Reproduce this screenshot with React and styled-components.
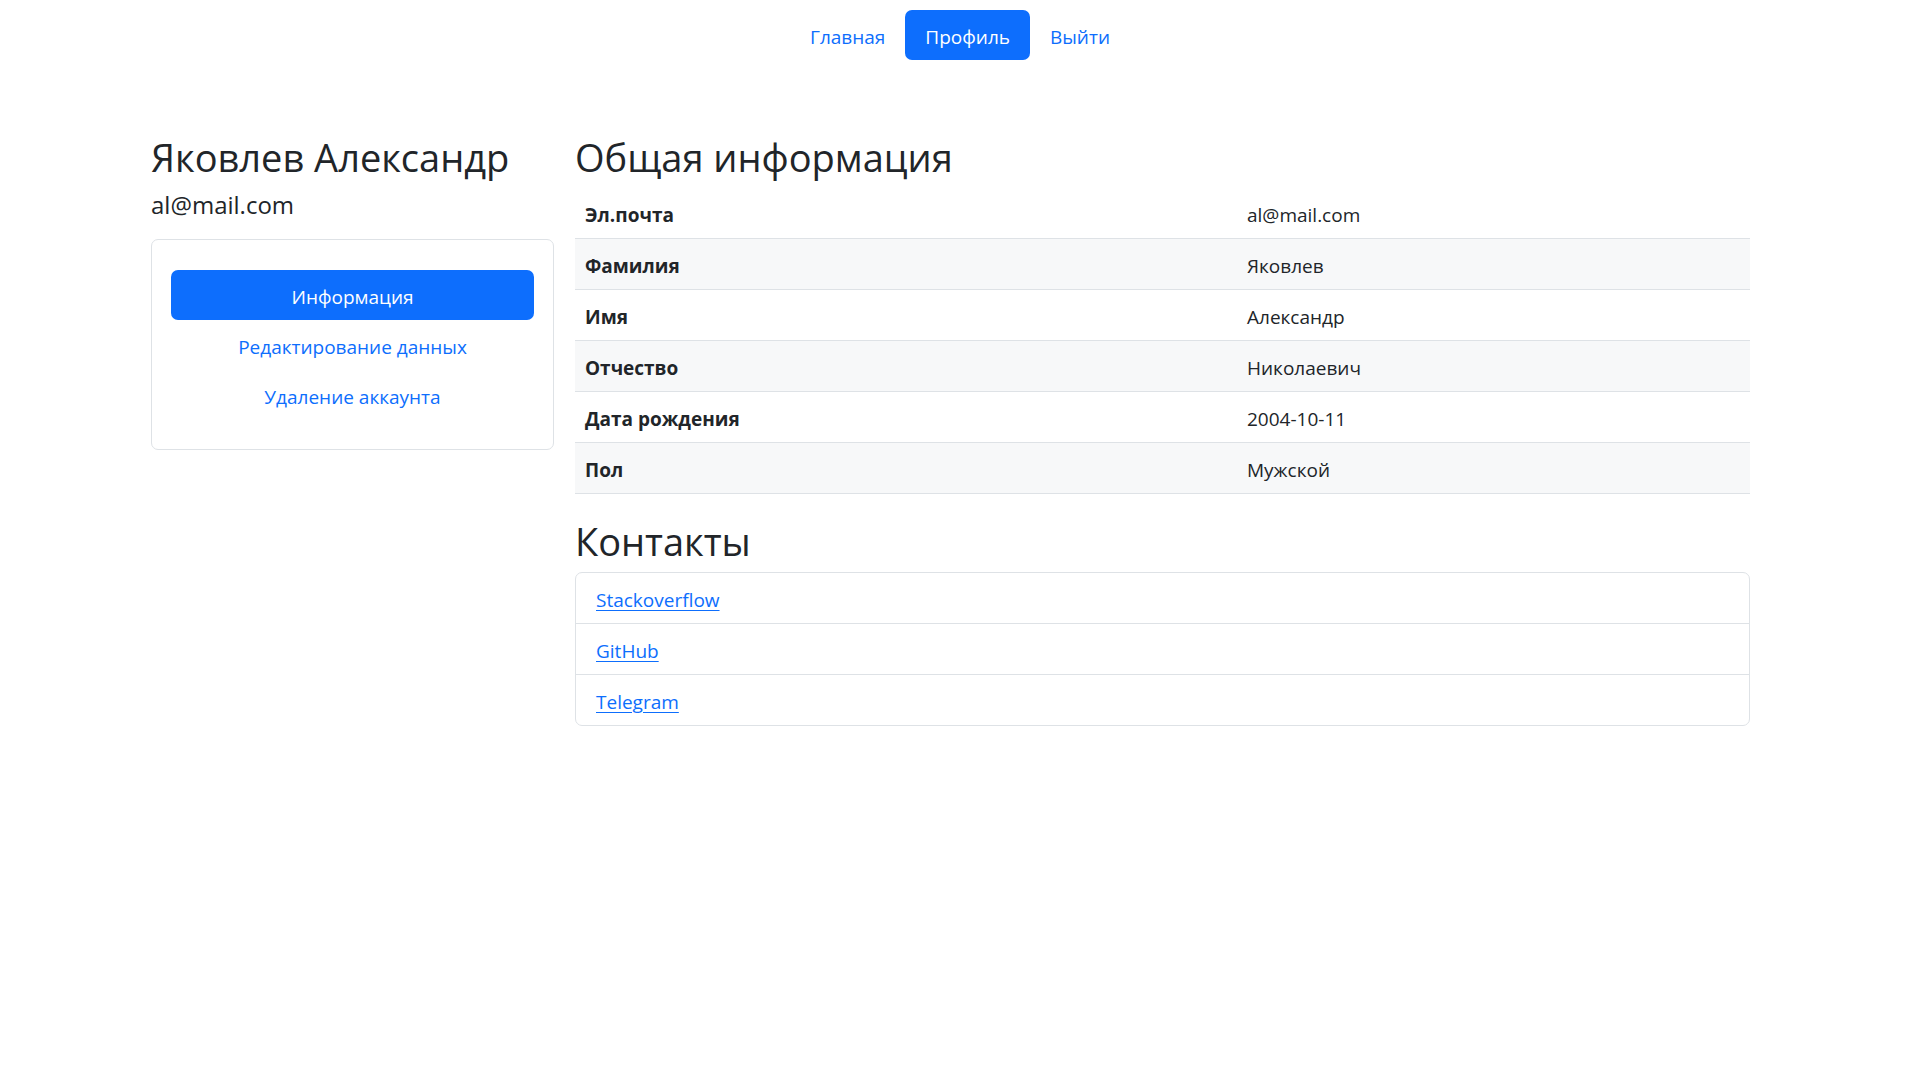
import React from "react";
import styled, { createGlobalStyle } from "styled-components";

const Global = createGlobalStyle`
  html, body { margin: 0; padding: 0; background: #fff; }
  body {
    font-family: "Segoe UI", "Open Sans", "Noto Sans", sans-serif;
    color: #212529;
    font-size: 19px;
    line-height: 30px;
  }
  * { box-sizing: border-box; }
`;

const Header = styled.header`
  padding-top: 10px;
`;

const Nav = styled.ul`
  display: flex;
  justify-content: center;
  list-style: none;
  margin: 0;
  padding: 0;
`;

const NavLink = styled.a`
  display: block;
  padding: 12px 20px 8px;
  font-size: 19px;
  line-height: 30px;
  border-radius: 7px;
  text-decoration: none;
  color: ${(p) => (p.$active ? "#fff" : "#0d6efd")};
  background: ${(p) => (p.$active ? "#0d6efd" : "transparent")};
`;

const Container = styled.main`
  width: 1650px;
  margin: 70px auto 0;
  padding: 0 16px;
  display: grid;
  grid-template-columns: 403px 1175px;
  column-gap: 21px;
  align-items: start;
`;

const Column = styled.section`
  display: flex;
  flex-direction: column;
`;

const Title = styled.h2`
  margin: 0 0 7px;
  padding-top: 3px;
  font-size: 38px;
  line-height: 48px;
  font-weight: 400;
  color: #212529;
`;

const Email = styled.h5`
  margin: 0 0 19px;
  padding-top: 2px;
  font-size: 24px;
  line-height: 30px;
  font-weight: 400;
`;

const Card = styled.div`
  border: 1px solid #dee2e6;
  border-radius: 7px;
  padding: 30px 19px 29px;
  display: flex;
  flex-direction: column;
`;

const PillLink = styled.a`
  display: block;
  text-align: center;
  padding: 12px 20px 8px;
  font-size: 19px;
  line-height: 30px;
  border-radius: 7px;
  text-decoration: none;
  color: ${(p) => (p.$active ? "#fff" : "#0d6efd")};
  background: ${(p) => (p.$active ? "#0d6efd" : "transparent")};
`;

const Table = styled.table`
  width: 100%;
  border-collapse: collapse;
  margin-bottom: 20px;
`;

const Row = styled.tr`
  background: ${(p) => (p.$striped ? "#f7f8f9" : "#fff")};
`;

const Th = styled.th`
  width: 662px;
  text-align: left;
  font-weight: 700;
  padding: 12px 10px 8px;
  line-height: 30px;
  border-bottom: 1px solid #dee2e6;
`;

const Td = styled.td`
  padding: 12px 10px 8px;
  line-height: 30px;
  border-bottom: 1px solid #dee2e6;
`;

const List = styled.ul`
  list-style: none;
  margin: 0;
  padding: 0;
  border: 1px solid #dee2e6;
  border-radius: 7px;
`;

const ListItem = styled.li`
  padding: 12px 20px 8px;
  line-height: 30px;
  & + & { border-top: 1px solid #dee2e6; }
`;

const ContactLink = styled.a`
  color: #0d6efd;
  text-decoration: underline;
  text-underline-offset: 3px;
`;

const info = [
  ["Эл.почта", "al@mail.com"],
  ["Фамилия", "Яковлев"],
  ["Имя", "Александр"],
  ["Отчество", "Николаевич"],
  ["Дата рождения", "2004-10-11"],
  ["Пол", "Мужской"],
];

const contacts = ["Stackoverflow", "GitHub", "Telegram"];

export default function App() {
  return (
    <>
      <Global />
      <Header>
        <Nav>
          <li><NavLink href="#">Главная</NavLink></li>
          <li><NavLink href="#" $active>Профиль</NavLink></li>
          <li><NavLink href="#">Выйти</NavLink></li>
        </Nav>
      </Header>
      <Container>
        <Column>
          <Title>Яковлев Александр</Title>
          <Email>al@mail.com</Email>
          <Card>
            <PillLink href="#" $active>Информация</PillLink>
            <PillLink href="#">Редактирование данных</PillLink>
            <PillLink href="#">Удаление аккаунта</PillLink>
          </Card>
        </Column>
        <Column>
          <Title>Общая информация</Title>
          <Table>
            <tbody>
              {info.map(([k, v], i) => (
                <Row key={k} $striped={i % 2 === 1}>
                  <Th>{k}</Th>
                  <Td>{v}</Td>
                </Row>
              ))}
            </tbody>
          </Table>
          <Title>Контакты</Title>
          <List>
            {contacts.map((c) => (
              <ListItem key={c}>
                <ContactLink href="#">{c}</ContactLink>
              </ListItem>
            ))}
          </List>
        </Column>
      </Container>
    </>
  );
}
